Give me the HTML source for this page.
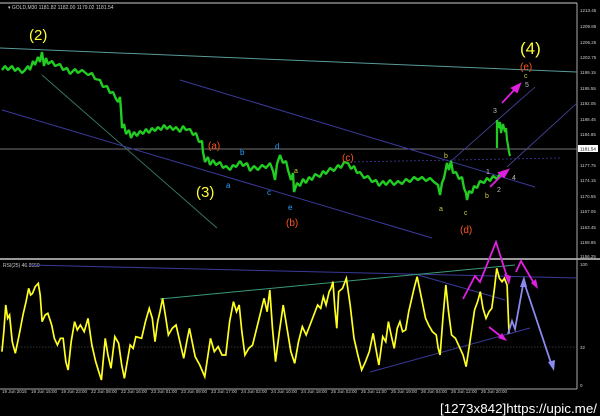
<!DOCTYPE html>
<html><head><style>
html,body{margin:0;padding:0;background:#000;width:600px;height:416px;overflow:hidden}
svg{display:block}
text{font-family:"Liberation Sans",sans-serif}
</style></head><body>
<svg width="600" height="416" viewBox="0 0 600 416" xmlns="http://www.w3.org/2000/svg">
<rect width="600" height="416" fill="#000"/>
<line x1="0" y1="3" x2="577" y2="3" stroke="#888" stroke-width="1.5"/>
<line x1="0" y1="259" x2="600" y2="259" stroke="#999" stroke-width="2"/>
<line x1="577" y1="3" x2="577" y2="389" stroke="#aaa" stroke-width="1"/>
<line x1="0" y1="389" x2="577" y2="389" stroke="#aaa" stroke-width="1"/>
<text x="8" y="9" font-size="5" fill="#ccc">▾ GOLD,M30  1181.82 1182.00 1179.02 1181.54</text>
<!-- main chart lines -->
<line x1="0" y1="149" x2="577" y2="149" stroke="#999" stroke-width="0.8"/>
<line x1="0" y1="48" x2="577" y2="72" stroke="#5a9a9a" stroke-width="1"/>
<line x1="42" y1="75" x2="217" y2="228" stroke="#3a7a6a" stroke-width="0.9"/>
<line x1="2" y1="110" x2="432" y2="238" stroke="#3a3a9a" stroke-width="1"/>
<line x1="180" y1="80" x2="535" y2="187" stroke="#3a3a9a" stroke-width="1"/>
<line x1="350" y1="162" x2="560" y2="158" stroke="#3a3a9a" stroke-width="0.8" stroke-dasharray="2,2"/>
<line x1="450" y1="162" x2="535" y2="87" stroke="#4a4aaa" stroke-width="0.8"/>
<line x1="507" y1="167" x2="577" y2="103" stroke="#4a4aaa" stroke-width="0.8"/>
<polyline fill="none" stroke="#2c2" stroke-width="2.4" stroke-linejoin="bevel" points="2,70 5,66 8,70 12,66 15,71 18,68 22,73 25,70 28,66 30,70 33,61 35,65 38,57 40,62 42,52 44,66 46,58 48,64 52,61 55,66 60,64 63,70 67,68 70,74 75,69 78,73 82,70 88,75 92,73 95,79 100,80 103,87 107,86 110,93 113,92 116,99 118,102 120,97 121,110 122,128 124,124 126,134 129,130 131,138 134,132 137,136 140,131 143,134 146,129 149,133 152,128 155,131 158,127 161,130 164,125 167,129 170,126 173,130 176,127 180,132 183,126 186,130 190,129 193,135 196,133 199,142 202,141 203,152 205,162 208,157 210,165 213,160 216,165 220,162 223,168 226,166 230,170 233,165 236,167 240,161 243,166 247,163 250,171 254,166 258,170 262,165 266,168 270,163 273,171 275,180 277,164 280,155 283,163 286,161 288,170 291,180 293,173 294,192 297,183 300,186 303,179 306,183 309,177 312,180 315,174 320,177 323,171 326,174 330,168 334,171 338,165 341,168 344,162 348,163 351,169 354,166 357,173 360,172 364,178 368,176 372,182 376,180 379,186 383,181 386,185 390,180 394,185 398,181 402,184 406,179 410,182 414,177 418,180 422,177 426,181 430,178 434,182 438,185 440,195 442,183 444,178 447,163 449,170 451,161 453,173 456,172 459,179 462,177 464,188 466,193 467,200 469,191 472,193 474,186 477,188 480,181 484,183 487,178 490,181 493,176 497,179 500,174 503,172"/>
<polyline fill="none" stroke="#2c2" stroke-width="2.2" points="497,148 497,120 499,128 500,122 501,133 503,124 505,132 506,128 507,140 508,145 509,152 510,156"/>
<!-- magenta arrows main -->
<g stroke="#e020e0" stroke-width="1.8" fill="#e020e0">
<line x1="502" y1="103" x2="517" y2="87"/><polygon points="520,84 512,88 517,92"/>
<line x1="490" y1="187" x2="504" y2="173"/><polygon points="508,170 499,173 504,177"/>
</g>
<!-- labels main -->
<g font-size="15" fill="#ffff33"><text x="29" y="40">(2)</text><text x="196" y="197">(3)</text><text x="520" y="54" font-size="17">(4)</text></g>
<g font-size="10" fill="#ff5522"><text x="208" y="149">(a)</text><text x="286" y="226">(b)</text><text x="342" y="161">(c)</text><text x="460" y="233">(d)</text><text x="520" y="70">(e)</text></g>
<g font-size="8" fill="#2aa0ff"><text x="240" y="155">b</text><text x="275" y="149">d</text><text x="226" y="188">a</text><text x="267" y="195">c</text><text x="288" y="210">e</text></g>
<g font-size="7" fill="#cccc44"><text x="294" y="173">a</text><text x="444" y="158">b</text><text x="439" y="211">a</text><text x="464" y="215">c</text><text x="485" y="198">b</text><text x="524" y="78">c</text></g>
<g font-size="7" fill="#bbb"><text x="486" y="174">1</text><text x="497" y="192">2</text><text x="493" y="113">3</text><text x="512" y="180">4</text><text x="525" y="87">5</text></g>
<!-- right axis -->
<g font-size="4.5" fill="#ccc">
<text x="580" y="12">1213.45</text><text x="580" y="28">1209.85</text><text x="580" y="44">1206.25</text><text x="580" y="59">1202.75</text><text x="580" y="74">1199.15</text><text x="580" y="90">1195.55</text><text x="580" y="105">1192.05</text><text x="580" y="121">1188.45</text><text x="580" y="136">1184.85</text><text x="580" y="167">1177.75</text><text x="580" y="182">1174.15</text><text x="580" y="198">1170.55</text><text x="580" y="213">1167.05</text><text x="580" y="229">1163.45</text><text x="580" y="244">1159.85</text><text x="580" y="258">1156.25</text>
<text x="580" y="266">100</text><text x="580" y="349">32</text><text x="580" y="387">0</text>
</g>
<rect x="578" y="145" width="20" height="7" fill="#fff"/>
<text x="580" y="150.5" font-size="4.5" fill="#000">1181.54</text>
<!-- RSI -->
<text x="3" y="267" font-size="5" fill="#ccc">RSI(25) 46.9550</text>
<line x1="0" y1="347" x2="577" y2="347" stroke="#666" stroke-width="0.6" stroke-dasharray="1.5,1.5"/>
<line x1="30" y1="265" x2="577" y2="278" stroke="#3a3a9a" stroke-width="1"/>
<line x1="160" y1="299" x2="515" y2="265" stroke="#3a9a7a" stroke-width="1"/>
<line x1="418" y1="275" x2="505" y2="300" stroke="#3a3a9a" stroke-width="1"/>
<line x1="370" y1="372" x2="530" y2="328" stroke="#3a3a9a" stroke-width="1"/>
<g transform="translate(0,255) scale(0.3827,0.3333)">
<polyline fill="none" stroke="#ffff22" stroke-width="1.7" vector-effect="non-scaling-stroke" points="5,290 10,230 15,150 20,190 25,180 32,260 40,295 50,240 60,180 68,140 75,100 80,120 85,115 92,95 100,85 105,120 110,200 118,180 125,175 135,210 142,250 150,270 158,250 165,250 172,320 178,345 186,260 195,200 202,225 210,210 220,230 230,190 240,270 250,320 258,350 265,375 275,250 282,300 290,340 300,245 310,265 318,330 325,370 340,270 348,280 355,245 370,250 380,200 390,160 398,190 405,260 412,200 418,170 425,130 432,180 440,240 450,220 460,210 470,260 480,310 488,260 495,220 502,260 510,305 522,330 535,365 550,250 560,290 570,275 580,300 590,300 600,200 610,140 618,170 625,150 632,230 640,300 650,280 660,270 675,200 690,130 698,170 705,105 712,220 720,320 730,230 740,150 750,220 760,290 770,325 780,260 790,215 800,240 810,210 820,180 830,150 838,160 845,125 852,150 860,110 865,100 870,80 875,160 880,220 885,110 895,100 905,70 915,150 925,250 935,300 945,345 955,320 965,290 975,235 982,280 990,330 1000,245 1008,260 1015,200 1022,240 1030,280 1038,220 1045,200 1052,230 1060,225 1068,170 1075,135 1082,100 1090,65 1098,110 1105,150 1112,190 1120,210 1130,230 1140,240 1145,280 1150,300 1158,180 1165,90 1172,170 1180,240 1190,250 1200,275 1210,300 1218,335 1228,260 1240,165 1248,140 1255,110 1262,160 1270,190 1278,170 1285,160 1292,100 1298,40 1305,70 1312,80 1318,70 1325,90 1330,235"/>
</g>
<g stroke="#e020e0" stroke-width="1.8" fill="none">
<polyline points="463,299 475,276 480,282 496,242 508,280"/>
<polyline points="516,272 521,261 535,285"/>
<line x1="489" y1="327" x2="503" y2="338"/>
</g>
<g fill="#e020e0"><polygon points="509,285 504,274 511,276"/><polygon points="538,289 531,283 536,279"/><polygon points="507,341 498,338 502,333"/></g>
<g stroke="#8a8af0" stroke-width="1.8" fill="none">
<polyline points="508,334 512,321 515,329 523,285"/>
<line x1="524" y1="282" x2="552" y2="366"/>
</g>
<g fill="#8a8af0"><polygon points="524,276 520,287 527,287"/><polygon points="554,371 548,362 555,360"/></g>
<!-- time axis -->
<g font-size="4.5" fill="#ccc">
<text x="2" y="393">19 Jun 2015</text><text x="31" y="393">19 Jun 15:00</text><text x="61" y="393">19 Jun 23:00</text><text x="91" y="393">22 Jun 08:00</text><text x="121" y="393">22 Jun 16:00</text><text x="151" y="393">23 Jun 01:00</text><text x="181" y="393">23 Jun 09:00</text><text x="211" y="393">23 Jun 17:00</text><text x="241" y="393">24 Jun 02:00</text><text x="271" y="393">24 Jun 10:00</text><text x="301" y="393">24 Jun 18:00</text><text x="331" y="393">25 Jun 03:00</text><text x="361" y="393">25 Jun 11:00</text><text x="391" y="393">25 Jun 19:00</text><text x="421" y="393">26 Jun 04:00</text><text x="451" y="393">26 Jun 12:00</text><text x="481" y="393">26 Jun 20:00</text>
</g>
<text x="440" y="413" font-size="13" fill="#fff" font-family="Liberation Mono,monospace" textLength="157" lengthAdjust="spacingAndGlyphs">[1273x842]https://upic.me/</text>
</svg>
</body></html>
